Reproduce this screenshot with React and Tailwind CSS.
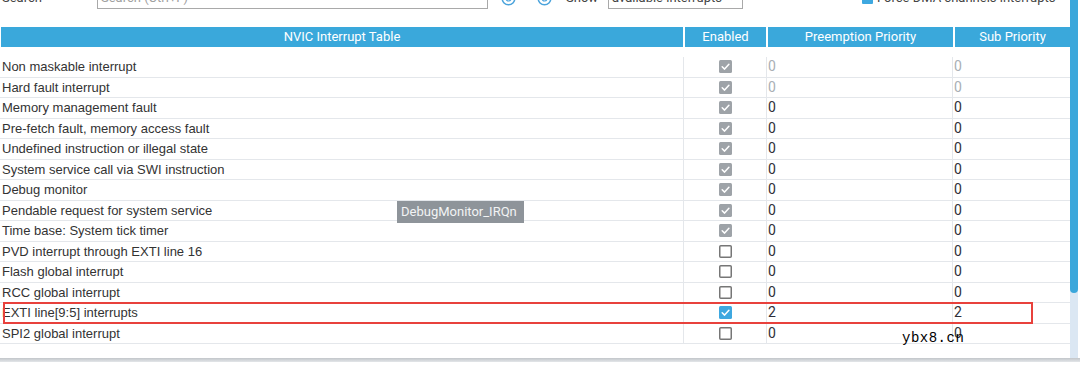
import React from "react";

const rows = [
  ["Non maskable interrupt", "gray", "0", "0", true],
  ["Hard fault interrupt", "gray", "0", "0", true],
  ["Memory management fault", "gray", "0", "0"],
  ["Pre-fetch fault, memory access fault", "gray", "0", "0"],
  ["Undefined instruction or illegal state", "gray", "0", "0"],
  ["System service call via SWI instruction", "gray", "0", "0"],
  ["Debug monitor", "gray", "0", "0"],
  ["Pendable request for system service", "gray", "0", "0"],
  ["Time base: System tick timer", "gray", "0", "0"],
  ["PVD interrupt through EXTI line 16", "off", "0", "0"],
  ["Flash global interrupt", "off", "0", "0"],
  ["RCC global interrupt", "off", "0", "0"],
  ["EXTI line[9:5] interrupts", "blue", "2", "2"],
  ["SPI2 global interrupt", "off", "0", "0"],
];

function Check({ kind }) {
  if (kind === "off") {
    return (
      <svg width="13" height="13" viewBox="0 0 13 13">
        <rect x="0.75" y="0.75" width="11.5" height="11.5" rx="1" fill="#fff" stroke="#767676" strokeWidth="1.5" />
      </svg>
    );
  }
  const fill = kind === "blue" ? "#3ea8e0" : "#9ea3a8";
  return (
    <svg width="13" height="13" viewBox="0 0 13 13">
      <rect x="0" y="0" width="13" height="13" rx="1.5" fill={fill} />
      <path d="M3.2 6.8 L5.6 9.1 L9.9 4.2" stroke="#fff" strokeWidth="1.5" fill="none" strokeLinecap="round" strokeLinejoin="round" />
    </svg>
  );
}

function CircleIcon() {
  return (
    <svg width="15" height="15" viewBox="0 0 15 15">
      <circle cx="7.5" cy="7.5" r="6.3" fill="none" stroke="#4aa3dc" strokeWidth="1.5" />
      <circle cx="7.5" cy="7.5" r="2.5" fill="none" stroke="#4aa3dc" strokeWidth="1.2" />
    </svg>
  );
}

export default function App() {
  return (
    <div className="w-[1080px] h-[368px] overflow-hidden bg-white relative font-['Roboto',sans-serif] text-[#333]">
      <div className="flex h-[358px]">
        <div className="w-[1070px] flex flex-col">
          {/* top bar (clipped) */}
          <div className="flex items-center h-[22px] -mt-[13px] text-[13px] text-[#444] shrink-0">
            <div className="w-[97px] pl-[2px]">Search</div>
            <div className="w-[391px] h-[22px] border border-[#a9a9a9] flex items-center pl-[3px] text-[#a0a0a0]">Search (Ctrl+F)</div>
            <div className="ml-[13px] flex"><CircleIcon /></div>
            <div className="ml-[21px] flex"><CircleIcon /></div>
            <div className="ml-[14px] w-[42px]">Show</div>
            <div className="w-[135px] h-[22px] border border-[#a9a9a9] flex items-center pl-[3px] pr-[6px] justify-between">
              <span>available interrupts</span>
              <span className="text-[9px] text-[#666]">▼</span>
            </div>
            <div className="ml-[119px] w-[11px] h-[11px] bg-[#3ea8e0] rounded-[1px]" />
            <div className="ml-[4px]">Force DMA channels interrupts</div>
          </div>

          {/* header */}
          <div className="flex mt-[18px] h-[20px] pl-[1px] gap-[2px] text-white text-[13px] shrink-0">
            <div className="w-[682px] bg-[#3aa8db] flex items-center justify-center">NVIC Interrupt Table</div>
            <div className="w-[81px] bg-[#3aa8db] flex items-center justify-center">Enabled</div>
            <div className="w-[185px] bg-[#3aa8db] flex items-center justify-center">Preemption Priority</div>
            <div className="w-[115px] bg-[#3aa8db] flex items-center justify-center">Sub Priority</div>
          </div>

          {/* body */}
          <div className="mt-[10px] flex flex-col">
            {rows.map(([name, kind, p, s, dim], i) => (
              <div key={i} className="flex h-[20.5px] border-b border-[#e4e7eb]">
                <div className="w-[684px] border-r border-[#e4e7eb] flex items-center pl-[2px] font-['Liberation_Sans',Arial,sans-serif] text-[13px] text-[#333]">
                  {name}
                </div>
                <div className="w-[83px] border-r border-[#e4e7eb] flex items-center justify-center">
                  <Check kind={kind} />
                </div>
                <div className={`w-[186px] border-r border-[#e4e7eb] flex items-center pl-[1px] text-[14px] ${dim ? "text-[#a9afb5]" : "text-[#2e2e38]"}`}>
                  {p}
                </div>
                <div className={`w-[117px] flex items-center pl-[1px] text-[14px] ${dim ? "text-[#a9afb5]" : "text-[#2e2e38]"}`}>
                  {s}
                </div>
              </div>
            ))}
          </div>
        </div>
        {/* scrollbar */}
        <div className="w-[8px] bg-[#dbe7f3] flex flex-col">
          <div className="h-[293px] bg-[#3ba7db] rounded-b-[4px]" />
        </div>
      </div>
      <div className="h-[4px] bg-gradient-to-b from-[#c2c6ca] to-[#e3e6e9]" />

      {/* tooltip */}
      <div className="absolute left-[397px] top-[201px] w-[127px] h-[22px] bg-[#8e949a] text-[#f2f3f4] text-[13px] flex items-center pl-[4px]">
        DebugMonitor_IRQn
      </div>

      {/* red highlight */}
      <div className="absolute left-[3px] top-[302px] w-[1030px] h-[22px] border-2 border-[#e8413c]" />

      {/* watermark */}
      <div className="absolute left-[902px] top-[330px] font-['Liberation_Mono',monospace] text-[14px] tracking-[0.5px] text-black leading-[16px]">
        ybx8.cn
      </div>
    </div>
  );
}
